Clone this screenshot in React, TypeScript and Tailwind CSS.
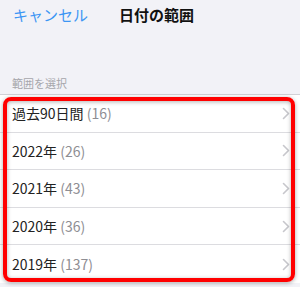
import React from "react";

const rows = [
  { label: "過去90日間", count: "(16)" },
  { label: "2022年", count: "(26)" },
  { label: "2021年", count: "(43)" },
  { label: "2020年", count: "(36)" },
  { label: "2019年", count: "(137)" },
];

function Chevron() {
  return (
    <svg width="8" height="13" viewBox="0 0 8 13" fill="none">
      <path d="M1.5 1.5L6.5 6.5L1.5 11.5" stroke="#c7c7cc" strokeWidth="1.6" strokeLinecap="round" strokeLinejoin="round" />
    </svg>
  );
}

export default function App() {
  return (
    <div
      className="relative w-[300px] h-[287px] overflow-hidden bg-[#f2f2f7]"
      style={{ fontFamily: '"Noto Sans CJK JP", "Noto Sans", sans-serif' }}
    >
      <div className="flex h-[29px] items-center px-[13px]">
        <span className="text-[15px] text-[#3d96f4] w-[106px] leading-none">キャンセル</span>
        <span className="text-[15px] font-bold text-[#111] leading-none">日付の範囲</span>
      </div>
      <div className="h-[65px] flex items-end px-[12px] pb-[5px]">
        <span className="text-[11px] text-[#a6a6ab] leading-none">範囲を選択</span>
      </div>
      <div className="border-t border-[#d1d1d6] bg-white">
        {rows.map((r, i) => (
          <div
            key={i}
            className={`flex h-[37.6px] items-center justify-between pl-[12px] pr-[10px] ${i < rows.length - 1 ? "border-b border-[#dcdce0]" : ""}`}
          >
            <span className="text-[14px] text-[#222] leading-none">
              {r.label} <span className="text-[#8e8e93]">{r.count}</span>
            </span>
            <Chevron />
          </div>
        ))}
      </div>
      <div className="absolute left-[3px] top-[97px] w-[292px] h-[185px] rounded-[8px] border-[4.5px] border-[#ff0000] shadow-[0_1px_4px_rgba(0,0,0,0.35),inset_0_1px_4px_rgba(0,0,0,0.3)] pointer-events-none" />
    </div>
  );
}
